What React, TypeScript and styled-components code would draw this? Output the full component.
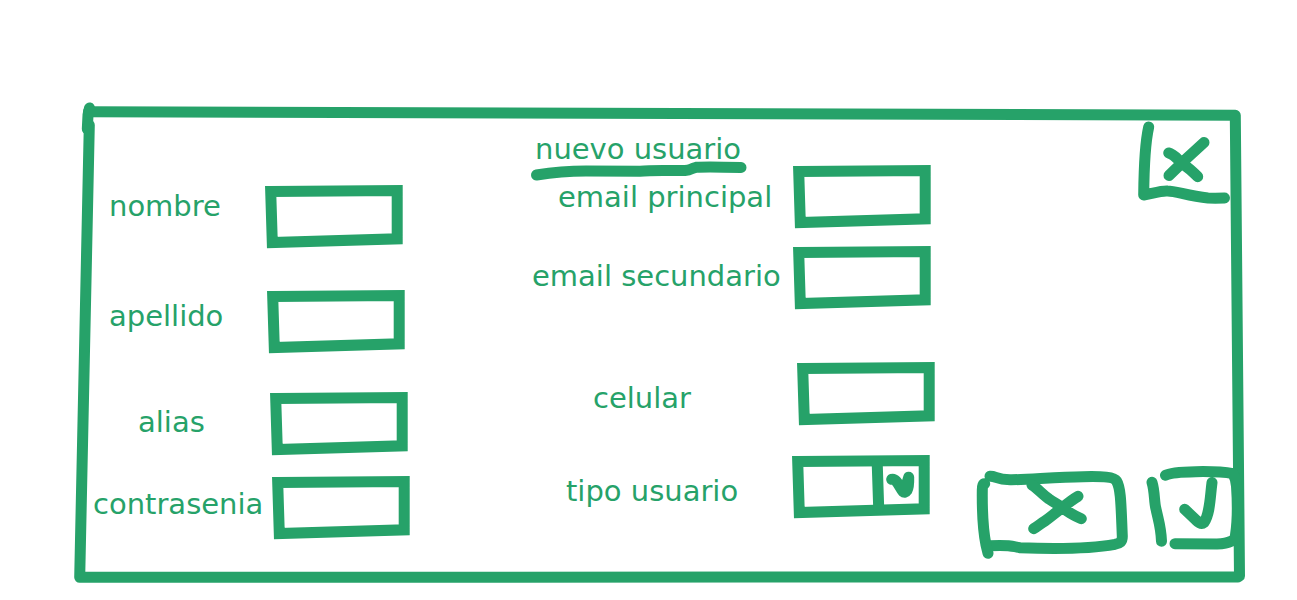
import React from "react";
import styled, { createGlobalStyle } from "styled-components";

const ink = "#26a269";

const GlobalStyle = createGlobalStyle`
  *, *::before, *::after { box-sizing: border-box; }
  body {
    margin: 0;
    background: #ffffff;
    color: ${ink};
    font-family: "DejaVu Sans", sans-serif;
    font-size: 29px;
    line-height: 32px;
  }
`;

const Page = styled.main`
  padding: 102px 52px 16px 74px;
`;

const Dialog = styled.form`
  position: relative;
  display: grid;
  grid-template-columns: 440fr 446fr 269fr;
  padding-left: 16px;
`;

const Sketch = styled.svg`
  position: absolute;
  inset: 0;
  width: 100%;
  height: 100%;
  overflow: visible;
  fill: none;
  stroke: ${ink};
  stroke-width: 11px;
  stroke-linecap: round;
  stroke-linejoin: round;
  pointer-events: none;
`;

const FrameSketch = styled(Sketch)`
  path {
    vector-effect: non-scaling-stroke;
  }
`;

const BoxOutline = styled.path`
  stroke-linejoin: miter;
`;

const Column = styled.div<{ $top: number }>`
  padding-top: ${(p) => p.$top}px;
  padding-bottom: 44px;
`;

const Title = styled.h1`
  position: relative;
  width: max-content;
  margin: 0;
  padding-left: 5px;
  font-size: inherit;
  font-weight: 400;
`;

const Underline = styled(Sketch)`
  inset: 28px auto auto 0;
  width: 218px;
  height: 20px;
`;

const Row = styled.div<{ $gap: number }>`
  display: flex;
  align-items: center;
  height: 64px;
  margin-top: ${(p) => p.$gap}px;
`;

const Label = styled.label<{ $width: number; $indent: number; $lift: number }>`
  flex: none;
  width: ${(p) => p.$width}px;
  padding-left: ${(p) => p.$indent}px;
  padding-bottom: ${(p) => Math.max(p.$lift, 0)}px;
  padding-top: ${(p) => Math.max(-p.$lift, 0)}px;
  white-space: nowrap;
`;

const Box = styled.div`
  position: relative;
  flex: none;
  width: 138px;
  height: 64px;
`;

const TextInput = styled.input`
  width: 100%;
  height: 100%;
  padding: 12px 16px;
  border: 0;
  outline: 0;
  background: transparent;
  color: inherit;
  font: inherit;
  font-size: 20px;
`;

const Select = styled.select`
  appearance: none;
  width: 100%;
  height: 100%;
  padding: 12px 60px 12px 16px;
  border: 0;
  outline: 0;
  background: transparent;
  color: inherit;
  font: inherit;
  font-size: 20px;
`;

const Actions = styled.div`
  display: flex;
  flex-direction: column;
  justify-content: space-between;
  align-items: flex-end;
  padding: 19px 1px 24px 0;
`;

const ActionRow = styled.div`
  display: flex;
  gap: 18px;
`;

const SketchButton = styled.button<{ $width: number; $height: number }>`
  position: relative;
  width: ${(p) => p.$width}px;
  height: ${(p) => p.$height}px;
  padding: 0;
  border: 0;
  background: transparent;
  cursor: pointer;
`;

const CloseButton = styled(SketchButton)`
  margin-right: 14px;
`;

type FieldProps = {
  id: string;
  label: string;
  gap?: number;
  width: number;
  indent?: number;
  lift?: number;
  type?: string;
};

function Field({ id, label, gap = 0, width, indent = 0, lift = 0, type = "text" }: FieldProps) {
  return (
    <Row $gap={gap}>
      <Label htmlFor={id} $width={width} $indent={indent} $lift={lift}>
        {label}
      </Label>
      <Box>
        {type === "select" ? (
          <Select id={id} defaultValue="">
            <option value="" />
          </Select>
        ) : (
          <TextInput id={id} type={type} />
        )}
        <Sketch viewBox="0 0 138 64" aria-hidden="true">
          <BoxOutline d="M5.7 6.5L132.2 5.6V53.8L7.3 57.5Z" />
          {type === "select" && (
            <>
              <path d="M85.2 8L86.7 53" />
              <path d="M99.7 24.3C104 23 107 31 111 36.5Q113 38.5 115 35.5Q117 32 116.7 22.2L113.5 33" />
            </>
          )}
        </Sketch>
      </Box>
    </Row>
  );
}

export default function App() {
  return (
    <>
      <GlobalStyle />
      <Page>
        <Dialog onSubmit={(e: React.FormEvent) => e.preventDefault()}>
          <FrameSketch viewBox="0 0 1171 482" preserveAspectRatio="none" aria-hidden="true">
            <path d="M15.5 6L14 13L13.3 27" />
            <path d="M14.5 9.7L1161.3 13.3L1165.5 474L1164 475L5.7 475.3L15.3 23" />
          </FrameSketch>

          <Column $top={83}>
            <Field id="nombre" label="nombre" width={175} indent={19} lift={22} />
            <Field id="apellido" label="apellido" gap={41} width={177} indent={19} lift={12} />
            <Field id="alias" label="alias" gap={38} width={180} indent={48} lift={4} />
            <Field id="contrasenia" label="contrasenia" gap={20} width={182} indent={3} lift={8} type="password" />
          </Column>

          <Column $top={31}>
            <Title>
              nuevo usuario
              <Underline viewBox="0 0 218 20" aria-hidden="true">
                <path d="M6.500 14C25 11 40 10 56 10L110 10.300C120 10 127 9 138 9.500L155 9.600C162 9 160 7.500 166 6.300C175 5.500 195 6 211 6.500" />
              </Underline>
            </Title>
            <Field id="email-principal" label="email principal" width={263} indent={28} type="email" />
            <Field id="email-secundario" label="email secundario" gap={17} width={263} indent={2} lift={4} type="email" />
            <Field id="celular" label="celular" gap={52} width={267} indent={63} lift={-8} type="tel" />
            <Field id="tipo-usuario" label="tipo usuario" gap={29} width={262} indent={36} lift={-8} type="select" />
          </Column>

          <Actions>
            <CloseButton type="button" aria-label="cerrar" $width={92} $height={82}>
              <Sketch viewBox="0 0 92 82" aria-hidden="true">
                <path d="M10.7 6C7.5 20 6 45 5.7 74C14 72.5 24 69.5 29.5 70C38 70 50 75 70 77C76 77.3 80 77.2 86.5 77" />
                <path d="M30.7 32C36 33 40 39 46 44C51 47 55 51 59.7 55.7M66 21.5L48 38L31 54.5" />
              </Sketch>
            </CloseButton>
            <ActionRow>
              <SketchButton type="button" aria-label="cancelar" $width={152} $height={94}>
                <Sketch viewBox="0 0 152 94" aria-hidden="true">
                  <path d="M14 10.3C20 10 20 13.5 34 13.7C50 14 80 10.8 107 10.7C127 10.3 138 11 140.5 15C145 22 145 40 146.3 70C146.5 76 144 77 139 78.3C110 83.5 65 82.5 44 81.7C36 80.5 36 78.5 14 79.7" />
                  <path d="M8.7 17.7Q6.3 17.5 6.3 24C6 50 7 64 10 79L12 87.3" />
                  <path d="M56 19C61 22 66 28 73 33C79 37 83 39 87 42C93 47 99 50 105.3 52.7M102 30.3C97 33 92 37 86 42C79 47 76 50 69 55C64 58 62 60 57.7 62.7" />
                </Sketch>
              </SketchButton>
              <SketchButton type="submit" aria-label="guardar" $width={98} $height={94}>
                <Sketch viewBox="0 0 98 94" aria-hidden="true">
                  <path d="M6 16.3C9 26 8 36 10 43C12 53 15 61 15.5 75.3" />
                  <path d="M19.5 9.3C27 5 70 4.5 87 7.7Q90 13 90.5 20C92 42 91.5 56 89.5 69Q90 77 71 78L29 77.7" />
                  <path d="M38.7 43.3L50 54Q55 59 58 56.5C64 48 64 32 66 16.5" />
                </Sketch>
              </SketchButton>
            </ActionRow>
          </Actions>
        </Dialog>
      </Page>
    </>
  );
}
